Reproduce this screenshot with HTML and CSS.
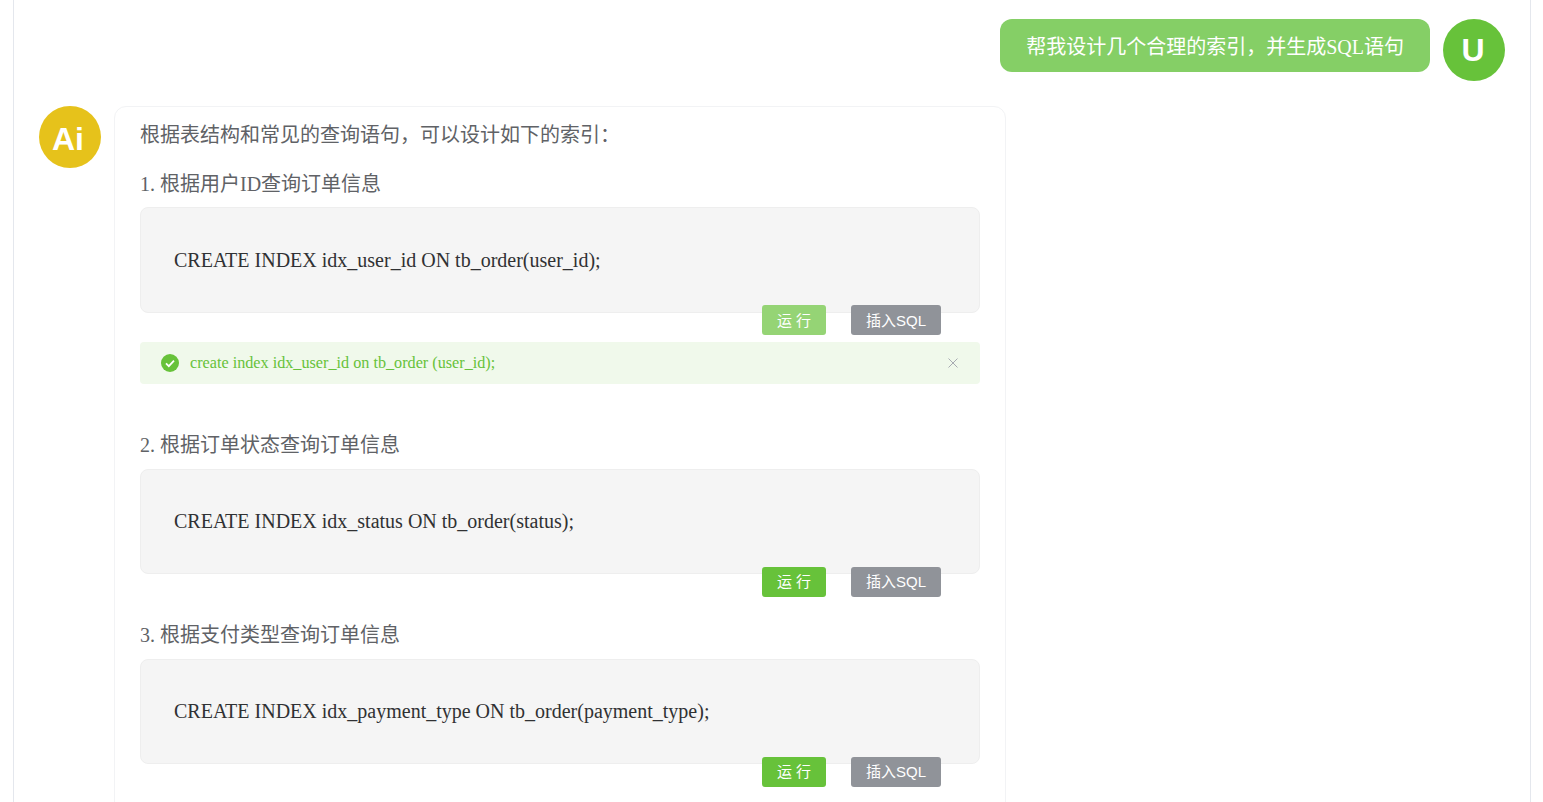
FILE: index.html
```html
<!DOCTYPE html>
<html lang="zh-CN">
<head>
  <meta charset="UTF-8" />
  <title>Chat</title>
  <link rel="stylesheet" href="styles.css">
</head>
<body>
  <div class="chat">
    <!-- user question -->
    <div class="row row-user">
      <div class="bubble-user">帮我设计几个合理的索引，并生成SQL语句</div>
      <div class="avatar avatar-user">U</div>
    </div>

    <!-- ai answer -->
    <div class="row">
      <div class="avatar avatar-ai">Ai</div>
      <div class="bubble-ai">
        <p class="intro">根据表结构和常见的查询语句，可以设计如下的索引：</p>

        <p class="step step-first">1. 根据用户ID查询订单信息</p>
        <div class="code">CREATE INDEX idx_user_id ON tb_order(user_id);</div>
        <div class="actions">
          <button class="btn btn-run btn-off">运 行</button>
          <button class="btn btn-insert">插入SQL</button>
        </div>
        <div class="alert">
          <svg class="alert-icon" viewBox="0 0 18 18" width="18" height="18">
            <circle cx="9" cy="9" r="9" fill="#67c23a" />
            <path d="M5 9.4l2.8 2.7L13 6.6" fill="none" stroke="#fff" stroke-width="1.8" />
          </svg>
          <span class="alert-text">create index idx_user_id on tb_order (user_id);</span>
          <svg class="alert-close" viewBox="0 0 10 10" width="10" height="10">
            <path d="M0.5 0.5l9 9M9.5 0.5l-9 9" fill="none" stroke="#a8abb2" stroke-width="1" />
          </svg>
        </div>

        <p class="step step-after-alert">2. 根据订单状态查询订单信息</p>
        <div class="code">CREATE INDEX idx_status ON tb_order(status);</div>
        <div class="actions">
          <button class="btn btn-run">运 行</button>
          <button class="btn btn-insert">插入SQL</button>
        </div>

        <p class="step step-after-actions">3. 根据支付类型查询订单信息</p>
        <div class="code">CREATE INDEX idx_payment_type ON tb_order(payment_type);</div>
        <div class="actions">
          <button class="btn btn-run">运 行</button>
          <button class="btn btn-insert">插入SQL</button>
        </div>
      </div>
    </div>
  </div>
</body>
</html>
```

FILE: styles.css
```css
* {
  margin: 0;
  padding: 0;
  box-sizing: border-box;
}
html, body {
  height: 802px;
  overflow: hidden;
  background: #fff;
}
body {
  padding: 0 12px 0 13px;
  font-family: "Liberation Serif", "Noto Sans CJK SC", serif;
}
.chat {
  height: 100%;
  padding: 19px 25px 0;
  display: flex;
  flex-direction: column;
  gap: 25px;
  border-left: 1px solid #e4e7ed;
  border-right: 1px solid #e4e7ed;
}
.row {
  display: flex;
  align-items: flex-start;
  gap: 13px;
}
.row-user {
  justify-content: flex-end;
}
.avatar {
  width: 62px;
  height: 62px;
  flex-shrink: 0;
  border-radius: 50%;
  display: flex;
  align-items: center;
  justify-content: center;
  color: #fff;
  font-family: "Liberation Sans", sans-serif;
  font-size: 32px;
  font-weight: bold;
}
.avatar-user {
  padding-right: 2px;
  background: #67c23a;
}
.avatar-ai {
  padding: 4px 4px 0 0;
  background: #e6c21b;
}
.bubble-user {
  padding: 14px 26px 0;
  height: 53px;
  border-radius: 12px;
  background: #85cf66;
  color: #fff;
  font-size: 20px;
  line-height: 29px;
}
.bubble-ai {
  width: 892px;
  padding: 13px 25px 40px;
  border: 1px solid #f2f3f5;
  border-radius: 12px;
  color: #606266;
  font-size: 20px;
}
.intro {
  line-height: 30px;
  margin-bottom: 19.2px;
}
.step {
  line-height: 30px;
  margin-bottom: 9px;
}
.step-first { margin-bottom: 8px; }
.step-after-alert { margin-top: 45.5px; }
.step-after-actions { margin-top: 23px; }
.code {
  height: 105.5px;
  padding: 1px 33px 0;
  display: flex;
  align-items: center;
  background: #f5f5f5;
  border: 1px solid #eeeeee;
  border-radius: 8px;
  color: #303133;
  font-size: 20px;
}
.actions {
  display: flex;
  justify-content: flex-end;
  gap: 25px;
  margin-top: -7.5px;
  padding-right: 39px;
  position: relative;
}
.btn {
  height: 30px;
  padding-bottom: 2px;
  border: none;
  border-radius: 3px;
  color: #fff;
  font-family: "Liberation Sans", "Noto Sans CJK SC", sans-serif;
  font-size: 15px;
}
.btn-run {
  width: 64px;
  background: #67c23a;
}
.btn-off { background: #95d475; }
.btn-insert {
  width: 90px;
  background: #909399;
}
.alert {
  height: 42px;
  margin-top: 7px;
  padding: 0 21px;
  display: flex;
  align-items: center;
  background: #f0f9eb;
  border-radius: 4px;
}
.alert-icon { flex-shrink: 0; }
.alert-text {
  flex: 1;
  margin: 1px 0 0 11px;
  color: #67c23a;
  font-size: 16.2px;
}
.alert-close { margin-right: 1px; }
```
